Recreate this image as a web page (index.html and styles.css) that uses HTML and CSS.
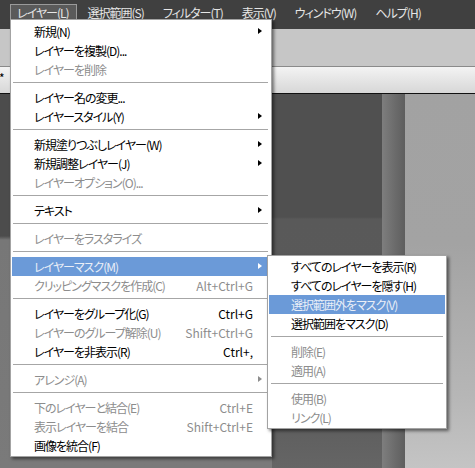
FILE: index.html
```html
<!DOCTYPE html>
<html lang="ja">
<head>
<meta charset="utf-8">
<title>レイヤーメニュー</title>
<link rel="stylesheet" href="styles.css">
</head>
<body>
<div class="app">
  <nav class="menubar">
    <span class="mb-item active">レイヤー(L)</span>
    <span class="mb-item">選択範囲(S)</span>
    <span class="mb-item">フィルター(T)</span>
    <span class="mb-item">表示(V)</span>
    <span class="mb-item">ウィンドウ(W)</span>
    <span class="mb-item">ヘルプ(H)</span>
  </nav>
  <div class="optbar"></div>
  <div class="tabbar"><span class="tab">*</span></div>
  <div class="workspace">
    <div class="pane pane-a"></div>
    <div class="pane pane-b"></div>
    <div class="pane strip"></div>
    <div class="pane pane-c"></div>
  </div>

  <div class="menu main-menu">
    <div class="mi sub">新規(N)<i class="arrow"></i></div>
    <div class="mi">レイヤーを複製(D)...</div>
    <div class="mi dis">レイヤーを削除</div>
    <div class="sep"></div>
    <div class="mi">レイヤー名の変更...</div>
    <div class="mi sub">レイヤースタイル(Y)<i class="arrow"></i></div>
    <div class="sep"></div>
    <div class="mi sub">新規塗りつぶしレイヤー(W)<i class="arrow"></i></div>
    <div class="mi sub">新規調整レイヤー(J)<i class="arrow"></i></div>
    <div class="mi dis">レイヤーオプション(O)...</div>
    <div class="sep"></div>
    <div class="mi sub">テキスト<i class="arrow"></i></div>
    <div class="sep"></div>
    <div class="mi dis">レイヤーをラスタライズ</div>
    <div class="sep"></div>
    <div class="mi sub hl">レイヤーマスク(M)<i class="arrow"></i></div>
    <div class="mi dis">クリッピングマスクを作成(C)<span class="key">Alt+Ctrl+G</span></div>
    <div class="sep"></div>
    <div class="mi">レイヤーをグループ化(G)<span class="key">Ctrl+G</span></div>
    <div class="mi dis">レイヤーのグループ解除(U)<span class="key">Shift+Ctrl+G</span></div>
    <div class="mi">レイヤーを非表示(R)<span class="key">Ctrl+,</span></div>
    <div class="sep"></div>
    <div class="mi sub dis">アレンジ(A)<i class="arrow"></i></div>
    <div class="sep"></div>
    <div class="mi dis">下のレイヤーと結合(E)<span class="key">Ctrl+E</span></div>
    <div class="mi dis">表示レイヤーを結合<span class="key">Shift+Ctrl+E</span></div>
    <div class="mi">画像を統合(F)</div>
  </div>

  <div class="menu sub-menu">
    <div class="mi">すべてのレイヤーを表示(R)</div>
    <div class="mi">すべてのレイヤーを隠す(H)</div>
    <div class="mi hl">選択範囲外をマスク(V)</div>
    <div class="mi">選択範囲をマスク(D)</div>
    <div class="sep"></div>
    <div class="mi dis">削除(E)</div>
    <div class="mi dis">適用(A)</div>
    <div class="sep"></div>
    <div class="mi dis">使用(B)</div>
    <div class="mi dis">リンク(L)</div>
  </div>
</div>
</body>
</html>
```

FILE: styles.css
```css
* { box-sizing: border-box; }
html, body { margin: 0; padding: 0; }
body {
  width: 475px;
  height: 468px;
  overflow: hidden;
  font-family: "Noto Sans CJK JP", "Noto Sans", sans-serif;
  font-size: 12px;
  font-feature-settings: "palt" 1;
  letter-spacing: -1px;
}
.app {
  position: relative;
  width: 475px;
  height: 468px;
  display: flex;
  flex-direction: column;
  overflow: hidden;
}
.menubar {
  height: 29px;
  flex: none;
  background: #404040;
  display: flex;
  align-items: flex-start;
  gap: 3px;
  padding: 4px 0 0 10px;
}
.mb-item {
  height: 15px;
  padding: 0 7px;
  line-height: 15px;
  color: #e6e6e6;
  white-space: nowrap;
  border: 1px solid transparent;
  border-bottom: 0;
}
.mb-item.active {
  background: #5a5a5a;
  border-color: #9a9a9a;
  padding: 0 7px 0 6px;
}
.optbar {
  height: 38px;
  flex: none;
  background: #c6c6c6;
  border-bottom: 1px solid #8a8a8a;
}
.tabbar {
  height: 27px;
  flex: none;
  background: linear-gradient(#f3f3f3, #d7d7d7);
  border-bottom: 1px solid #111;
  display: flex;
  align-items: center;
}
.tab {
  color: #000;
  font-size: 12px;
  line-height: 12px;
  margin-left: -1px;
  margin-top: -4px;
}
.workspace {
  flex: 1;
  display: flex;
}
.pane { height: 100%; }
.pane-a {
  width: 272px;
  background: linear-gradient(#4c4c4c 0, #4c4c4c 142px, #777 146px, #7a7a7a 100%);
}
.pane-b {
  width: 110px;
  background: linear-gradient(#505050 0, #505050 123px, #595959 125px, #5a5a5a 300px, #656565 100%);
}
.strip {
  width: 23px;
  background: linear-gradient(to right, #7e7e7e, #6a6a6a 60%, #5e5e5e);
}
.pane-c {
  flex: 1;
  background: linear-gradient(#a2a2a2 0, #a3a3a3 150px, #b6b6b6 300px, #c4c4c4 100%);
}

/* menus */
.menu {
  position: absolute;
  background: #fff;
  border: 1px solid #a3a3a3;
  box-shadow: 2px 2px 3px rgba(0, 0, 0, 0.5);
}
.main-menu {
  left: 10px;
  top: 19px;
  width: 262px;
  height: 438px;
  padding: 2px 3px 1px 1px;
}
.sub-menu {
  left: 267px;
  top: 255px;
  width: 180px;
  height: 174px;
  padding: 1px 1px;
}
.mi {
  position: relative;
  height: 19px;
  display: flex;
  align-items: center;
  padding: 0 15px 0 22px;
  color: #000;
  white-space: nowrap;
}
.mi.dis { color: #8d8d8d; }
.mi.hl { background: #6b9ad8; color: #e9eef7; }
.key {
  margin-left: auto;
  letter-spacing: 0;
}
.arrow {
  position: absolute;
  right: 6px;
  top: 6px;
  width: 0;
  height: 0;
  border-top: 3.5px solid transparent;
  border-bottom: 3.5px solid transparent;
  border-left: 4px solid #000;
}
.mi.dis .arrow { border-left-color: #8d8d8d; }
.mi.hl .arrow { border-left-color: #fff; }
.sep {
  height: 9px;
  padding-top: 3px;
  margin: 0 0 0 1px;
}
.sep::before {
  content: "";
  display: block;
  border-top: 1px solid #a6a6a6;
}
.sub-menu .sep { margin: 0 2px; }
```
